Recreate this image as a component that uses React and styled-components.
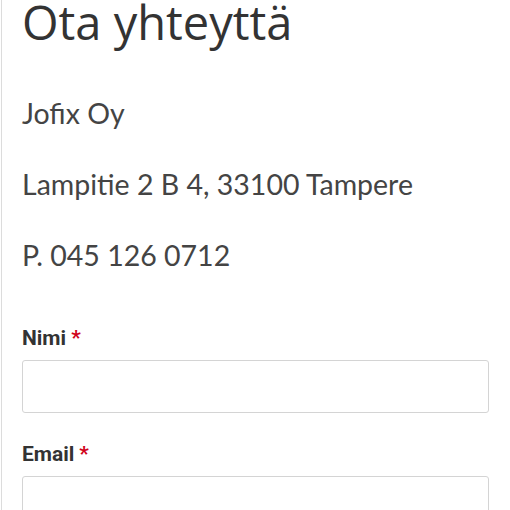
import React from 'react';
import styled, { createGlobalStyle } from 'styled-components';

const Global = createGlobalStyle`
  body {
    margin: 0;
    background: #fff;
  }
`;

const Page = styled.div`
  margin-left: 1px;
  border-left: 1px solid #dcdcdc;
  padding: 0 21px 0 20px;
  min-height: 510px;
  box-sizing: border-box;
`;

const Title = styled.h1`
  margin: 0;
  font-family: "Open Sans", sans-serif;
  font-weight: 400;
  font-size: 47px;
  line-height: 44px;
  color: #333;
`;

const Info = styled.p`
  margin: 0;
  font-family: Lato, sans-serif;
  font-size: 28.5px;
  line-height: 71px;
  color: #444;
`;

const InfoBlock = styled.div`
  margin-top: 34px;
`;

const Form = styled.form`
  margin-top: 35px;
  display: flex;
  flex-direction: column;
  gap: 29px;
`;

const Field = styled.div`
  display: flex;
  flex-direction: column;
  gap: 10px;
`;

const Label = styled.label`
  font-family: Roboto, sans-serif;
  font-weight: 700;
  font-size: 21px;
  line-height: 24px;
  color: #333;

  & > span {
    color: #d0021b;
    margin-left: 5px;
  }
`;

const Input = styled.input`
  height: 53px;
  box-sizing: border-box;
  border: 1px solid #d4d4d4;
  border-radius: 3px;
  background: #fff;
  width: 100%;
`;

const App = () => (
  <>
    <Global />
    <Page>
      <Title>Ota yhteyttä</Title>
      <InfoBlock>
        <Info>Jofix Oy</Info>
        <Info>Lampitie 2 B 4, 33100 Tampere</Info>
        <Info>P. 045 126 0712</Info>
      </InfoBlock>
      <Form>
        <Field>
          <Label>Nimi<span>*</span></Label>
          <Input type="text" />
        </Field>
        <Field>
          <Label>Email<span>*</span></Label>
          <Input type="email" />
        </Field>
      </Form>
    </Page>
  </>
);

export default App;
